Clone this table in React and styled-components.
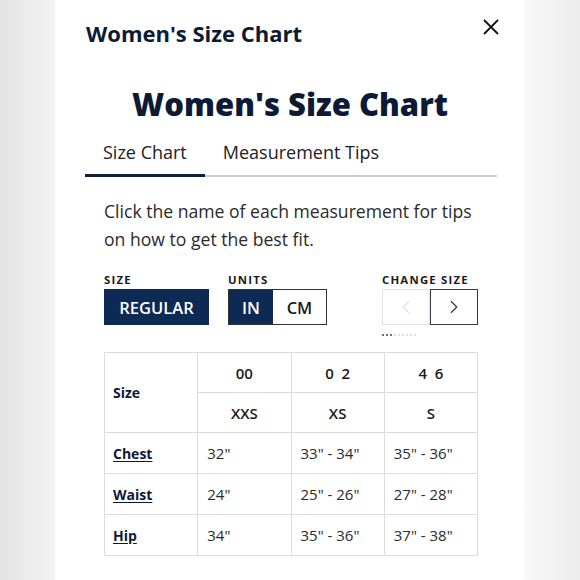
import React from 'react';
import styled, { createGlobalStyle } from 'styled-components';
import { ChevronLeft, ChevronRight } from 'lucide-react';

const GlobalStyle = createGlobalStyle`
    body {
        margin: 0;
        font-family: "Open Sans", Lato, sans-serif;
        background: #fff;
    }
`

const rows = [
    { name: 'Chest', values: ['32"', '33" - 34"', '35" - 36"'] },
    { name: 'Waist', values: ['24"', '25" - 26"', '27" - 28"'] },
    { name: 'Hip', values: ['34"', '35" - 36"', '37" - 38"'] },
];

const sizes = [
    { num: '00', letter: 'XXS' },
    { num: '0\u00a0\u00a02', letter: 'XS' },
    { num: '4\u00a0\u00a06', letter: 'S' },
];

function App() {
    return (
        <>
            <GlobalStyle />
            <Page>
                <Panel>
                    <Header>
                        <HeaderTitle>Women's Size Chart</HeaderTitle>
                        <CloseButton aria-label="Close">
                            <svg width="16" height="16" viewBox="0 0 16 16">
                                <path d="M1 1 L15 15 M15 1 L1 15" stroke="#111" strokeWidth="1.8" fill="none" />
                            </svg>
                        </CloseButton>
                    </Header>

                    <Title>Women's Size Chart</Title>

                    <Tabs>
                        <Tab $active>Size Chart</Tab>
                        <Tab>Measurement Tips</Tab>
                    </Tabs>

                    <Body>
                        <Intro>
                            Click the name of each measurement for tips on how to get the best fit.
                        </Intro>

                        <Controls>
                            <Group>
                                <Label>Size</Label>
                                <SolidButton>Regular</SolidButton>
                            </Group>
                            <Group>
                                <Label>Units</Label>
                                <Toggle>
                                    <ToggleOption $active>IN</ToggleOption>
                                    <ToggleOption>CM</ToggleOption>
                                </Toggle>
                            </Group>
                            <Group $push>
                                <Label>Change Size</Label>
                                <Pager>
                                    <PagerButton $disabled>
                                        <ChevronLeft size={22} strokeWidth={1.1} />
                                    </PagerButton>
                                    <PagerButton>
                                        <ChevronRight size={22} strokeWidth={1.2} />
                                    </PagerButton>
                                </Pager>
                                <Dots>
                                    {[0, 1, 2, 3, 4, 5, 6, 7, 8].map(i => (
                                        <Dot key={i} $on={i < 3} />
                                    ))}
                                </Dots>
                            </Group>
                        </Controls>

                        <Table>
                            <tbody>
                                <tr>
                                    <RowHead rowSpan={2}>Size</RowHead>
                                    {sizes.map(s => <HeadCell key={s.letter}>{s.num}</HeadCell>)}
                                </tr>
                                <tr>
                                    {sizes.map(s => <HeadCell key={s.letter}>{s.letter}</HeadCell>)}
                                </tr>
                                {rows.map(row => (
                                    <BodyRow key={row.name}>
                                        <RowHead><Link>{row.name}</Link></RowHead>
                                        {row.values.map((v, i) => <Cell key={i}>{v}</Cell>)}
                                    </BodyRow>
                                ))}
                            </tbody>
                        </Table>
                    </Body>
                </Panel>
            </Page>
        </>
    )
}

export default App;

const navy = '#0d2a55';
const ink = '#0c1a36';

const Page = styled.div`
    min-height: 580px;
    display: flex;
    justify-content: center;
    background: linear-gradient(90deg, #e3e3e3 0%, #f3f3f3 9.4%, #fff 9.6%, #fff 90.2%, #f9f9f9 90.4%, #ebebeb 100%);
`

const Panel = styled.div`
    width: 468px;
    background: #fff;
`

const Header = styled.div`
    display: flex;
    justify-content: space-between;
    align-items: flex-start;
    padding: 20px 25px 0 30px;
`

const HeaderTitle = styled.h2`
    margin: 0;
    font-size: 22px;
    line-height: 26px;
    font-weight: 700;
    color: ${ink};
`

const CloseButton = styled.button`
    border: 0;
    background: none;
    padding: 0;
    margin-top: -1px;
    cursor: pointer;
`

const Title = styled.h1`
    margin: 38px 0 0;
    text-align: center;
    font-size: 31px;
    line-height: 40px;
    font-weight: 800;
    color: ${ink};
`

const Tabs = styled.div`
    display: flex;
    margin: 0 27px 0 29px;
    border-bottom: 2px solid #cdcdcd;
`

const Tab = styled.div`
    padding: 16px 18px 10px;
    font-size: 18px;
    line-height: 24px;
    color: #222;
    border-bottom: 3px solid ${p => p.$active ? '#0f1f3d' : 'transparent'};
    margin-bottom: -2px;
    cursor: pointer;
`

const Body = styled.div`
    padding: 0 46px 0 48px;
`

const Intro = styled.p`
    margin: 20px 0 0;
    font-size: 17.6px;
    line-height: 28px;
    color: #2a2a2a;
`

const Controls = styled.div`
    display: flex;
    gap: 19px;
    margin-top: 20px;
`

const Group = styled.div`
    display: flex;
    flex-direction: column;
    margin-left: ${p => p.$push ? 'auto' : '0'};
`

const Label = styled.div`
    font-size: 11.4px;
    line-height: 14px;
    font-weight: 700;
    letter-spacing: 1.2px;
    text-transform: uppercase;
    color: #1b1b1b;
    margin-bottom: 2px;
`

const SolidButton = styled.div`
    width: 105px;
    height: 36px;
    box-sizing: border-box;
    display: flex;
    align-items: center;
    justify-content: center;
    background: ${navy};
    color: #fff;
    font-size: 16.5px;
    font-weight: 600;
    text-transform: uppercase;
`

const Toggle = styled.div`
    display: flex;
    height: 36px;
    box-sizing: border-box;
    border: 1.5px solid #333;
`

const ToggleOption = styled.div`
    display: flex;
    align-items: center;
    justify-content: center;
    width: ${p => p.$active ? '44px' : '53px'};
    background: ${p => p.$active ? navy : '#fff'};
    color: ${p => p.$active ? '#fff' : '#1b1b1b'};
    font-size: 16.5px;
    font-weight: 600;
`

const Pager = styled.div`
    display: flex;
    height: 36px;
`

const PagerButton = styled.div`
    width: 48px;
    box-sizing: border-box;
    display: flex;
    align-items: center;
    justify-content: center;
    border: ${p => p.$disabled ? '1px solid #e2e2e2' : '1.5px solid #3a3a4a'};
    color: ${p => p.$disabled ? '#d6d6d6' : '#333'};
`

const Dots = styled.div`
    display: flex;
    gap: 2px;
    margin-top: 9px;
`

const Dot = styled.span`
    width: 2px;
    height: 2px;
    border-radius: 50%;
    background: ${p => p.$on ? '#444' : '#d4d4d4'};
`

const Table = styled.table`
    margin-top: 16px;
    width: 374px;
    border-collapse: collapse;
    table-layout: fixed;
    font-size: 15px;
    color: #2b2b2b;

    td {
        border: 1.5px solid #dcdcdc;
        height: 39px;
        padding: 0;
    }
`

const BodyRow = styled.tr`
    td {
        height: 40px;
    }
`

const HeadCell = styled.td`
    text-align: center;
    font-weight: 600;
    color: #1b1b1b;
`

const RowHead = styled.td`
    padding-left: 8px !important;
    font-size: 14px;
    font-weight: 700;
    color: ${ink};
`

const Link = styled.span`
    text-decoration: underline;
    text-underline-offset: 2px;
    cursor: pointer;
`

const Cell = styled.td`
    padding-left: 9px !important;
`
